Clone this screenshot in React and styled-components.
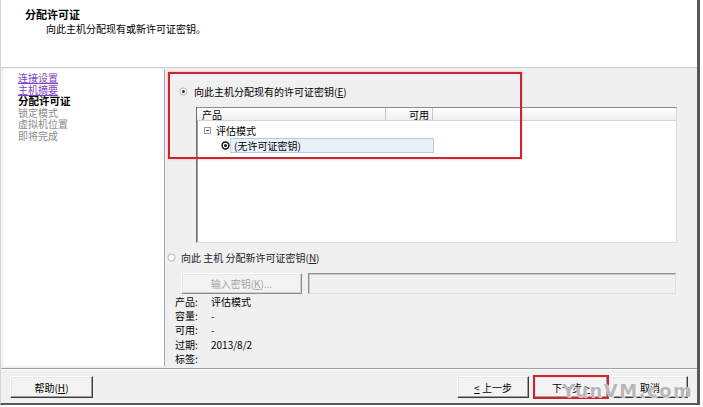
import React from 'react';
import styled, { createGlobalStyle } from 'styled-components';

const GlobalStyle = createGlobalStyle`
  html, body { margin: 0; padding: 0; background: #fff; }
  body {
    font-family: "Noto Sans CJK SC", "Liberation Sans", sans-serif;
    font-size: 10px;
    color: #000;
  }
  * { box-sizing: border-box; }
`;

const FONT = `"Noto Sans CJK SC", "Liberation Sans", sans-serif`;

const Window = styled.div`
  position: relative;
  width: 700px;
  height: 405px;
  display: flex;
  flex-direction: column;
  background: #f0f0f0;
  border-left: 1px solid #d6d6d6;
  border-right: 3px solid #585858;
  border-bottom: 2px solid #585858;
  overflow: hidden;
`;

const Header = styled.div`
  height: 68px;
  flex: none;
  background: #fff;
  border-bottom: 1px solid #cfcfcf;
  padding: 8px 0 0 24px;
`;

const Title = styled.div`
  font-size: 11px;
  font-weight: bold;
  line-height: 13px;
`;

const Subtitle = styled.div`
  font-size: 10px;
  line-height: 13px;
  padding-left: 21px;
  margin-top: 1px;
`;

const Body = styled.div`
  height: 300px;
  flex: none;
  display: flex;
  padding: 1px 0 2px 2px;
`;

const Nav = styled.div`
  width: 162px;
  flex: none;
  background: #fff;
  border-right: 1px solid #a8a8a8;
  padding: 3px 0 0 15px;
  display: flex;
  flex-direction: column;
`;

const NavItem = styled.div`
  line-height: 11.5px;
  font-size: ${p => (p.$state === 'current' ? '10.5px' : '10px')};
  font-weight: ${p => (p.$state === 'current' ? 'bold' : 'normal')};
  color: ${p => (p.$state === 'link' ? '#8140c4' : p.$state === 'current' ? '#000' : '#8a8a8a')};
  text-decoration: ${p => (p.$state === 'link' ? 'underline' : 'none')};
`;

const Main = styled.div`
  flex: 1;
  position: relative;
  display: flex;
  flex-direction: column;
  padding-top: 15px;
`;

const Highlight = styled.div`
  position: absolute;
  left: ${p => p.$x}px;
  top: ${p => p.$y}px;
  width: ${p => p.$w}px;
  height: ${p => p.$h}px;
  border: 2px solid #d0232d;
  box-shadow: 0 0 2px rgba(208, 35, 45, 0.35);
  pointer-events: none;
`;

const RadioRow = styled.div`
  display: flex;
  align-items: center;
  height: 14px;
  gap: ${p => p.$gap}px;
  margin-left: ${p => p.$left}px;
  margin-top: ${p => p.$top || 0}px;
  color: ${p => (p.$dim ? '#222' : '#000')};
`;

const ListView = styled.div`
  margin: 9px 0 0 31px;
  width: 481px;
  height: 136px;
  background: #fff;
  border: 1px solid;
  border-color: #6f6f6f #dcdcdc #dcdcdc #6f6f6f;
  box-shadow: inset 1px 0 #a0a0a0;
  display: flex;
  flex-direction: column;
`;

const ListHeader = styled.div`
  height: 14px;
  display: flex;
  background: linear-gradient(#ffffff, #eef0f3);
  border-bottom: 1px solid #d5d5d5;
  border-top: 1px solid #8c8c8c;
  margin-top: -1px;
`;

const HeaderCell = styled.div`
  width: ${p => (p.$w ? `${p.$w}px` : 'auto')};
  flex: ${p => (p.$w ? 'none' : '1')};
  line-height: 13px;
  padding: 0 ${p => p.$pr || 0}px 0 ${p => p.$pl || 0}px;
  text-align: ${p => p.$align || 'left'};
  border-right: ${p => (p.$w ? '1px solid #c8c8c8' : 'none')};
`;

const ListBody = styled.div`
  padding-top: 2px;
  display: flex;
  flex-direction: column;
`;

const TreeRow = styled.div`
  height: 15px;
  display: flex;
  align-items: center;
  padding-left: ${p => p.$indent}px;
  gap: ${p => p.$gap}px;
`;

const KeyCell = styled.div`
  width: 204px;
  height: 15px;
  line-height: 13px;
  padding-left: 3px;
  background: #eaf1fa;
  border: 1px solid #b4cbe4;
`;

const ActionRow = styled.div`
  display: flex;
  gap: 6px;
  margin: 8px 0 0 16px;
`;

const Button = styled.button`
  width: ${p => p.$w}px;
  height: ${p => p.$h || 22}px;
  padding: 0;
  flex: none;
  font-family: ${FONT};
  font-size: 10px;
  color: ${p => (p.disabled ? '#a3a3a3' : '#000')};
  background: #f3f3f3;
  border: 1px solid;
  border-color: ${p => (p.disabled ? '#ffffff #8c8c8c #8c8c8c #ffffff' : '#ffffff #3a3a3a #3a3a3a #ffffff')};
  box-shadow: inset -1px -1px ${p => (p.disabled ? '#d0d0d0' : '#a0a0a0')}, inset 1px 1px #e6e6e6;
  outline: ${p => (p.$marked ? '2px solid #d0232d' : 'none')};
  outline-offset: -1px;
  margin-left: ${p => p.$ml || 0}px;
  u { text-decoration: underline; }
`;

const KeyField = styled.div`
  width: 368px;
  height: 21px;
  background: #f0f0f0;
  border: 1px solid;
  border-color: #8e8e8e #dedede #dedede #8e8e8e;
  box-shadow: inset 1px 1px #c8c8c8;
`;

const InfoTable = styled.div`
  margin: 1px 0 0 10px;
  display: grid;
  grid-template-columns: 36px 1fr;
  line-height: 14.25px;
`;

const Footer = styled.div`
  flex: 1;
  display: flex;
  align-items: flex-start;
  padding: 7px 9px 0 9px;
  border-top: 1px solid #a0a0a0;
  box-shadow: inset 0 1px #ffffff;
`;

const RightButtons = styled.div`
  margin-left: auto;
  display: flex;
  gap: 4px;
`;

const Watermark = styled.div`
  position: absolute;
  left: 561px;
  top: 380px;
  font-family: "DejaVu Sans", sans-serif;
  font-weight: bold;
  font-size: 18px;
  line-height: 22px;
  letter-spacing: 1.5px;
  color: rgba(165, 165, 165, 0.8);
  text-shadow: 0 0 1px #fff, 1px 1px 0 rgba(255, 255, 255, 0.7);
  pointer-events: none;
`;

const Radio = ({ checked }) => (
  <svg width="9" height="9" viewBox="0 0 9 9">
    <circle cx="4.5" cy="4.5" r="3.6" fill="#fafafa" stroke="#a8a8a8" strokeWidth="0.8" />
    {checked && <circle cx="4.5" cy="4.5" r="1.5" fill="#2b2b2b" />}
  </svg>
);

const Collapse = () => (
  <svg width="7" height="7" viewBox="0 0 7 7">
    <rect x="0.5" y="0.5" width="6" height="6" fill="#fff" stroke="#9a9a9a" />
    <line x1="2" y1="3.5" x2="5" y2="3.5" stroke="#444" />
  </svg>
);

const KeyIcon = () => (
  <svg width="9" height="9" viewBox="0 0 9 9">
    <circle cx="4.5" cy="4.5" r="3.4" fill="#fff" stroke="#111" strokeWidth="1.5" />
    <circle cx="4.5" cy="4.5" r="1.5" fill="#111" />
  </svg>
);

export default function App() {
  return (
    <>
      <GlobalStyle />
      <Window>
        <Header>
          <Title>分配许可证</Title>
          <Subtitle>向此主机分配现有或新许可证密钥。</Subtitle>
        </Header>
        <Body>
          <Nav>
            <NavItem $state="link">连接设置</NavItem>
            <NavItem $state="link">主机摘要</NavItem>
            <NavItem $state="current">分配许可证</NavItem>
            <NavItem $state="pending">锁定模式</NavItem>
            <NavItem $state="pending">虚拟机位置</NavItem>
            <NavItem $state="pending">即将完成</NavItem>
          </Nav>
          <Main>
            <RadioRow $left={14} $gap={6}>
              <Radio checked />
              <span>向此主机分配现有的许可证密钥(<u>E</u>)</span>
            </RadioRow>
            <ListView>
              <ListHeader>
                <HeaderCell $w={189} $pl={5}>产品</HeaderCell>
                <HeaderCell $w={47} $pr={3} $align="right">可用</HeaderCell>
                <HeaderCell />
              </ListHeader>
              <ListBody>
                <TreeRow $indent={7} $gap={5}>
                  <Collapse />
                  <span>评估模式</span>
                </TreeRow>
                <TreeRow $indent={24} $gap={0}>
                  <KeyIcon />
                  <KeyCell>(无许可证密钥)</KeyCell>
                </TreeRow>
              </ListBody>
            </ListView>
            <RadioRow $left={2} $gap={5} $top={8} $dim>
              <Radio />
              <span>向此 主机 分配新许可证密钥(<u>N</u>)</span>
            </RadioRow>
            <ActionRow>
              <Button $w={121} $h={21} disabled>
                输入密钥(<u>K</u>)...
              </Button>
              <KeyField />
            </ActionRow>
            <InfoTable>
              <span>产品:</span><span>评估模式</span>
              <span>容量:</span><span>-</span>
              <span>可用:</span><span>-</span>
              <span>过期:</span><span>2013/8/2</span>
              <span>标签:</span><span></span>
            </InfoTable>
            <Highlight $x={3} $y={3} $w={354} $h={87} />
          </Main>
        </Body>
        <Footer>
          <Button $w={83}>帮助(<u>H</u>)</Button>
          <RightButtons>
            <Button $w={72}><u>&lt;</u> 上一步</Button>
            <Button $w={74} $ml={1} $marked>下一步 <u>&gt;</u></Button>
            <Button $w={76}>取消</Button>
          </RightButtons>
        </Footer>
        <Watermark>YunVM.com</Watermark>
      </Window>
    </>
  );
}
